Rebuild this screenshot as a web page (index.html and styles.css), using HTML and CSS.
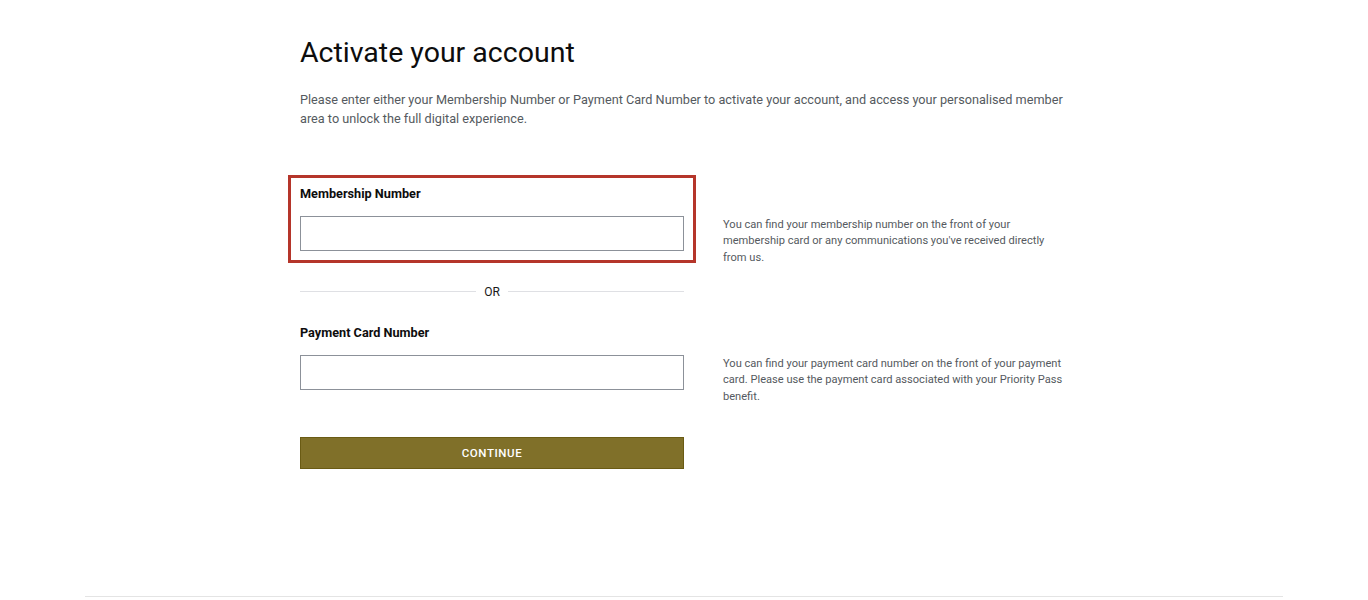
FILE: index.html
```html
<!DOCTYPE html>
<html lang="en">
<head>
<meta charset="utf-8">
<title>Activate your account</title>
<link rel="stylesheet" href="styles.css">
</head>
<body>
<main class="page">
  <h1 class="title">Activate your account</h1>
  <p class="intro">Please enter either your Membership Number or Payment Card Number to activate your account, and access your personalised member area to unlock the full digital experience.</p>

  <form class="form">
    <div class="row">
      <div class="field highlight">
        <label class="label" for="member">Membership Number</label>
        <input class="input" id="member" type="text">
      </div>
      <p class="hint">You can find your membership number on the front of your membership card or any communications you've received directly from us.</p>
    </div>

    <div class="divider"><span class="divider-text">OR</span></div>

    <div class="row">
      <div class="field">
        <label class="label" for="card">Payment Card Number</label>
        <input class="input" id="card" type="text">
      </div>
      <p class="hint">You can find your payment card number on the front of your payment card. Please use the payment card associated with your Priority Pass benefit.</p>
    </div>

    <button class="button" type="button">CONTINUE</button>
  </form>
</main>
<footer class="footer"></footer>
</body>
</html>
```
FILE: styles.css
```css
* { box-sizing: border-box; }

html, body {
  margin: 0;
  padding: 0;
  background: #ffffff;
}

body {
  font-family: Roboto, "Liberation Sans", Arial, sans-serif;
  color: #111;
}

.page {
  width: 768px;
  margin: 0 auto;
  padding-top: 36px;
}

.title {
  margin: 0;
  font-size: 28.5px;
  line-height: 34px;
  font-weight: 400;
  color: #0d0d0d;
}

.intro {
  margin: 19.5px 0 0;
  font-size: 12.7px;
  line-height: 19px;
  color: #555a60;
}

.form {
  margin-top: 58px;
  display: flex;
  flex-direction: column;
}

.row {
  display: grid;
  grid-template-columns: 384px 1fr;
  column-gap: 39px;
  align-items: start;
}

.field {
  display: flex;
  flex-direction: column;
}

.field.highlight {
  border: 3px solid #b5352a;
  padding: 8px 9px 9px 9px;
  margin: -11px -12px -12px -12px;
}

.label {
  font-size: 12.7px;
  line-height: 16px;
  font-weight: 700;
  color: #0d0d0d;
  margin-bottom: 14.5px;
}

.input {
  display: block;
  width: 100%;
  height: 35px;
  border: 1px solid #8c9199;
  border-radius: 0;
  background: #fff;
  padding: 0 10px;
  font: inherit;
  outline: none;
}

.hint {
  margin: 0;
  padding-top: 31px;
  width: 341px;
  font-size: 11.1px;
  line-height: 16.5px;
  color: #555a60;
}

.divider {
  width: 384px;
  margin: 17.5px 0 25px;
  display: flex;
  align-items: center;
  gap: 8px;
}

.divider::before,
.divider::after {
  content: "";
  flex: 1;
  height: 1px;
  background: #dfe0e4;
}

.divider-text {
  font-size: 12px;
  line-height: 16px;
  color: #1a1a1a;
}

.button {
  margin-top: 31.5px;
  width: 384px;
  height: 32px;
  background: #807029;
  border: 1px solid #6a5b14;
  border-radius: 0;
  color: #ffffff;
  font-family: Roboto, "Liberation Sans", Arial, sans-serif;
  font-size: 11.5px;
  font-weight: 500;
  letter-spacing: 0.6px;
  padding: 0;
  cursor: pointer;
}

.footer {
  width: 1198px;
  margin: 127px auto 0;
  border-top: 1px solid #e4e4e4;
  height: 3px;
}
```
